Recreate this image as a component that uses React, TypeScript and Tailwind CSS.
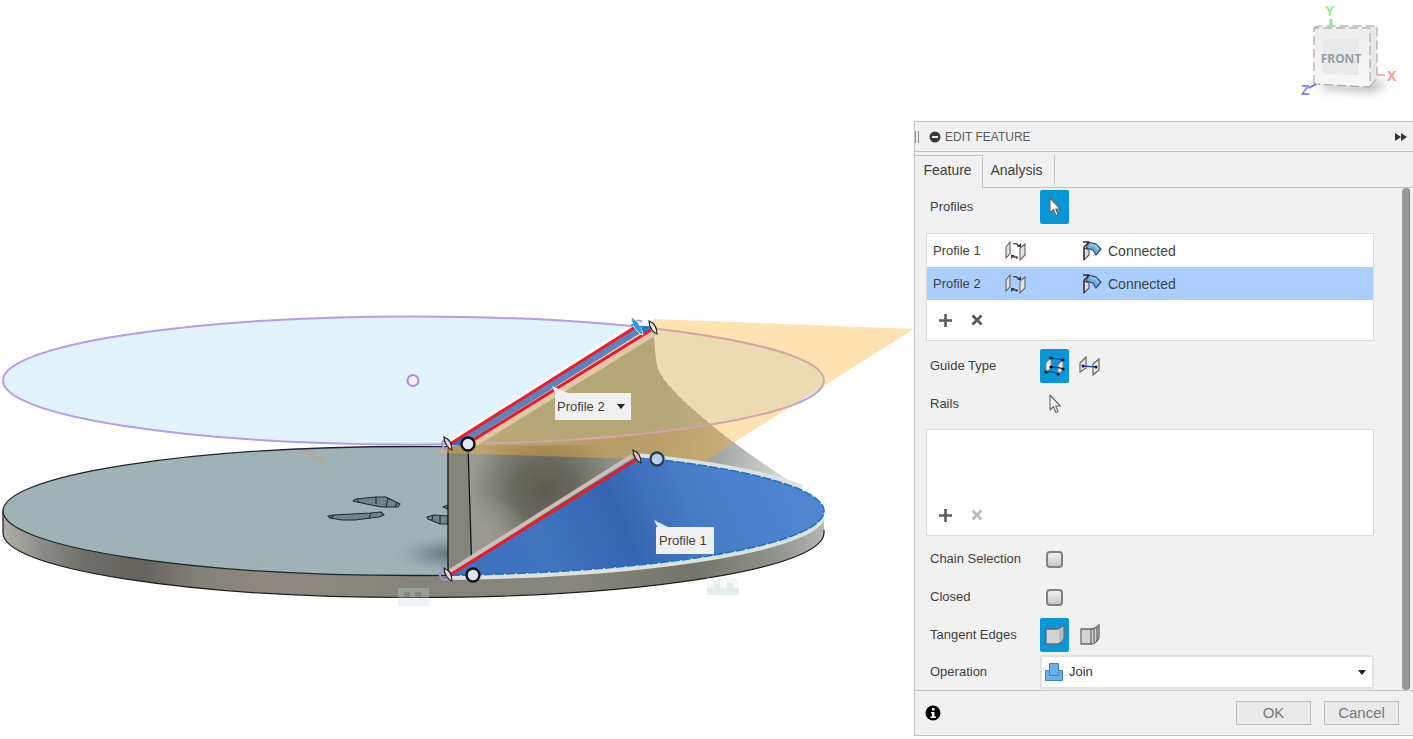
import { useState, type ReactNode } from 'react';
import clsx from 'clsx';

const RINGS = [
  { x: 468, y: 444, fill: '#e3e9f0', stroke: '#111111' },
  { x: 657, y: 459, fill: '#b9d0e8', stroke: '#2d3e52' },
  { x: 473, y: 575, fill: '#d9e4f2', stroke: '#111111' },
];

const GRIPS = [
  { x: 448, y: 444, fill: '#ead3dc', stroke: '#222222' },
  { x: 653, y: 328, fill: '#f3ece4', stroke: '#222222' },
  { x: 637, y: 457, fill: '#cfc9c4', stroke: '#222222' },
  { x: 448, y: 575, fill: '#ead3dc', stroke: '#222222' },
];

function ModelDrawing() {
  return (
    <svg
      className="block h-[739px] w-[914px]"
      viewBox="0 0 914 739"
      role="img"
      aria-label="Loft between two profiles"
    >
      <defs>
        <linearGradient id="wall" x1="0" x2="1">
          <stop offset="0" stopColor="#b0b0ab" />
          <stop offset="0.05" stopColor="#8c8a84" />
          <stop offset="0.1" stopColor="#706e68" />
          <stop offset="0.17" stopColor="#65635e" />
          <stop offset="0.24" stopColor="#85817b" />
          <stop offset="0.34" stopColor="#8e8980" />
          <stop offset="0.5" stopColor="#85837a" />
          <stop offset="0.7" stopColor="#87867e" />
          <stop offset="0.84" stopColor="#74746b" />
          <stop offset="0.94" stopColor="#8f918b" />
          <stop offset="1" stopColor="#b4b7b3" />
        </linearGradient>
        <linearGradient
          id="loft"
          gradientUnits="userSpaceOnUse"
          x1="468"
          y1="440"
          x2="800"
          y2="490"
        >
          <stop offset="0" stopColor="#999d95" />
          <stop offset="0.15" stopColor="#90958b" />
          <stop offset="0.35" stopColor="#8c9287" />
          <stop offset="0.55" stopColor="#8d9489" />
          <stop offset="0.75" stopColor="#a2a8a3" />
          <stop offset="0.88" stopColor="#c2c8c4" />
          <stop offset="1" stopColor="#e4e7e5" />
        </linearGradient>
        <radialGradient
          id="loftDark"
          gradientUnits="userSpaceOnUse"
          cx="545"
          cy="490"
          r="75"
        >
          <stop offset="0" stopColor="#5e5c52" />
          <stop offset="0.4" stopColor="#626158" stopOpacity="0.85" />
          <stop offset="1" stopColor="#666558" stopOpacity="0" />
        </radialGradient>
        <radialGradient
          id="loftLight"
          gradientUnits="userSpaceOnUse"
          cx="485"
          cy="532"
          r="40"
        >
          <stop offset="0" stopColor="#9c9a91" />
          <stop offset="1" stopColor="#9c9a91" stopOpacity="0" />
        </radialGradient>
        <radialGradient id="shade">
          <stop offset="0" stopColor="#5e737a" />
          <stop offset="0.4" stopColor="#73888e" stopOpacity="0.7" />
          <stop offset="1" stopColor="#9fb3b6" stopOpacity="0" />
        </radialGradient>
        <linearGradient
          id="blue"
          gradientUnits="userSpaceOnUse"
          x1="500"
          y1="590"
          x2="780"
          y2="470"
        >
          <stop offset="0" stopColor="#3f72bf" />
          <stop offset="0.2" stopColor="#4173bf" />
          <stop offset="0.45" stopColor="#3565b2" />
          <stop offset="0.68" stopColor="#477bc6" />
          <stop offset="1" stopColor="#4e86d2" />
        </linearGradient>
        <clipPath id="discLeft">
          <path d="M0 440H448V600H0Z" />
        </clipPath>
        <clipPath id="discRight">
          <path d="M448 578 636 452H824V600H448Z" />
        </clipPath>
      </defs>

      {/* base disc */}
      <path
        d="M3 511A410.5 64.5 0 0 0 824 511V533A410.5 64.5 0 0 1 3 533Z"
        fill="url(#wall)"
      />
      <path
        d="M3 511V533A410.5 64.5 0 0 0 824 533V530"
        fill="none"
        stroke="#1c1c1c"
        strokeWidth="1.2"
      />
      <g clipPath="url(#discLeft)">
        <ellipse
          cx="413.5"
          cy="511"
          rx="410.5"
          ry="64.5"
          fill="#9fb3b6"
          stroke="#1c2528"
          strokeWidth="1.3"
        />
        <ellipse cx="452" cy="554" rx="65" ry="22" fill="url(#shade)" />
      </g>
      <path d="M300 450 313 451 326 461 326 466Z" fill="#b5a596" opacity="0.6" />
      <path d="M250 568 267 560 266 566Z" fill="#b5a596" opacity="0.4" />

      {/* holes in the disc */}
      <g fill="#70858b" stroke="#1d2b30" strokeWidth="1.1" strokeLinejoin="round">
        <path d="M353 501 356 499 376 497H386L400 504 398 507H381L357 502Z" />
        <path d="M376 497V504M388 498 386 507M397 503 395 507M357 499 359 502" />
        <path d="M328 516 333 515 371 513 381 512 384 515 379 517 355 520H342L330 518Z" />
        <path d="M371 513 369 518M334 515 331 518" />
        <path d="M427 517 434 515 448 516V524H440L428 519Z" />
        <path d="M440 516V524M433 515 432 520" />
        <path d="M443 507 448 505V509Z" />
      </g>

      {/* loft body */}
      <path
        d="M468 444 654 330C654 345 656 362 658 370C670 392 696 412 726 437C748 453 778 474 802 489A410.5 64.5 0 0 0 636 457L472 572Z"
        fill="url(#loft)"
      />
      <path d="M468 446 600 445 636 457 472 572Z" fill="url(#loftDark)" />
      <path d="M469 480 540 515 472 572Z" fill="url(#loftLight)" />
      <path d="M448 446H468L472 575H448Z" fill="#84847a" />
      <path
        d="M448 446V575M468 446 472 575"
        fill="none"
        stroke="#141414"
        strokeWidth="1.3"
      />
      <path
        d="M658 370C670 392 696 412 726 437L738 446"
        fill="none"
        stroke="#4c4c3c"
        strokeWidth="1"
        strokeDasharray="1 6"
      />

      {/* upper sketch circle */}
      <ellipse cx="413.5" cy="380.5" rx="410.5" ry="64" fill="#78c8f0" fillOpacity="0.22" />
      <ellipse
        cx="413.5"
        cy="380.5"
        rx="410.5"
        ry="64"
        fill="none"
        stroke="#b79ce8"
        strokeWidth="2"
      />
      <circle cx="413" cy="380.5" r="5.5" fill="#f1f0fd" stroke="#b088e2" strokeWidth="2" />

      {/* construction plane */}
      <path
        d="M654 319 914 329 733 443 706 461 440 453V450L468 440 650 326Z"
        fill="#ffb434"
        fillOpacity="0.38"
      />

      {/* lower profile */}
      <g clipPath="url(#discRight)">
        <path
          d="M448 577A410.5 64.5 0 0 0 824 513M636 456A410.5 64.5 0 0 1 802 488"
          fill="none"
          stroke="#dfe1dc"
          strokeWidth="6"
        />
      </g>
      <path
        d="M448 575.3 636 457A410.5 64.5 0 0 1 824 511A410.5 64.5 0 0 1 448 575.3Z"
        fill="url(#blue)"
      />
      <path
        d="M654 459A410.5 64.5 0 0 1 824 511A410.5 64.5 0 0 1 448 575.3"
        fill="none"
        stroke="#1c72c8"
        strokeWidth="1.6"
        strokeDasharray="9 2"
      />
      <path d="M450 571 632 456" stroke="#cbbfbd" strokeWidth="4" />
      <path d="M450 575 637 459" stroke="#f01920" strokeWidth="3" />

      {/* upper profile */}
      <path d="M474 445 656 333" stroke="#dccb9f" strokeWidth="4" />
      <path d="M450 441 628 328" stroke="#ffffff" strokeWidth="3" />
      <path d="M450 444 636 325 650 327 466 443Z" fill="#5b83bf" />
      <path d="M636 327 645 326 654 327 642 334Z" fill="#2672cf" />
      <path d="M450 445 462 437 472 441 462 446Z" fill="#2672cf" />
      <path d="M450 444 637 326" stroke="#ee1c24" strokeWidth="3" />
      <path d="M472 443 652 332" stroke="#f5c0b0" strokeWidth="4" />
      <path d="M470 442 651 330" stroke="#e51a28" strokeWidth="3" />

      {/* handles */}
      <g fill="none" stroke="#ae8ce2" strokeWidth="2">
        <circle cx="446" cy="444" r="4" />
        <circle cx="445" cy="575" r="5" />
        <path d="M635 322A5 5 0 0 1 642 322" />
      </g>
      {RINGS.map((ring) => (
        <circle
          key={`${ring.x}-${ring.y}`}
          cx={ring.x}
          cy={ring.y}
          r="6.5"
          fill={ring.fill}
          stroke={ring.stroke}
          strokeWidth="2.4"
        />
      ))}
      {GRIPS.map((grip) => (
        <path
          key={`${grip.x}-${grip.y}`}
          transform={`translate(${grip.x} ${grip.y})`}
          d="M-4-7C1-5 4 0 4 6C1 5-4 0-4-7Z"
          fill={grip.fill}
          stroke={grip.stroke}
          strokeWidth="1.2"
        />
      ))}
      <path
        d="M631 317C637 320 642 327 643 335C637 333 632 326 631 317Z"
        fill="#2b9be0"
        stroke="#ffffff"
        strokeWidth="0.8"
      />
      <path d="M631 325 637 324M638 329 643 326" stroke="#2b9be0" strokeWidth="1.6" />

      {/* constraint marks */}
      <g opacity="0.3">
        <path d="M398 588H429V606H398Z" fill="#c6dcda" />
        <path d="M404 592H410V597H404ZM415 592H421V597H415Z" fill="#7d9391" />
      </g>
      <path d="M707 578H739V595H707Z" fill="#f1f5f4" fillOpacity="0.6" />
      <path d="M707 588H714V583H720V588H727V583H733V588H739V595H707Z" fill="#deefed" />

      {/* callout pointers */}
      <path d="M552 386 556 395 568 393Z" fill="#f0f0f0" />
      <path d="M654 520 658 528 668 527Z" fill="#e3e9f5" />
    </svg>
  );
}

function ViewCube() {
  return (
    <svg className="h-[110px] w-[133px]" viewBox="0 0 133 110" role="img" aria-label="View cube">
      <defs>
        <linearGradient id="cubeFace" x1="0" x2="0" y1="0" y2="1">
          <stop offset="0" stopColor="#eeeeee" />
          <stop offset="1" stopColor="#f7f7f7" />
        </linearGradient>
        <filter id="cubeShadow" x="-20%" y="-100%" width="140%" height="300%">
          <feGaussianBlur stdDeviation="4" />
        </filter>
      </defs>
      <path d="M38 84 98 80 106 86 92 93 44 90Z" fill="#c4c4c4" filter="url(#cubeShadow)" />
      <path d="M34 28 50 26H97V76L90 86 34 84Z" fill="#efefef" />
      <path d="M34 28H90V87L34 84Z" fill="url(#cubeFace)" />
      <path d="M90 28 97 26V78L90 87Z" fill="#e8e8e8" />
      <path d="M43 39H79V75L43 74Z" fill="#e7e9eb" />
      <path
        d="M34 84V28H90V87L34 84M34 28 38 26H97V78L90 87"
        fill="none"
        stroke="#9c9c9c"
        strokeWidth="1"
        strokeDasharray="9 4"
      />
      <text
        x="61"
        y="63"
        textAnchor="middle"
        className="font-['Noto_Sans',sans-serif] text-xs font-bold"
        fill="#989ea4"
      >
        FRONT
      </text>
      <path d="M51 19V25" stroke="#7bed7b" strokeWidth="3" />
      <path d="M97 75H105" stroke="#f5a0a0" strokeWidth="1.5" />
      <path d="M29 88 36 84" stroke="#6a6aea" strokeWidth="2" />
      <g className="font-['Liberation_Sans',sans-serif] text-[14px] font-bold">
        <text x="45" y="16" fill="#8bee8b">Y</text>
        <text x="107" y="81" fill="#f79a9a">X</text>
        <text x="21" y="95" fill="#8585ee">Z</text>
      </g>
    </svg>
  );
}

function CursorIcon({ light = false }: { light?: boolean }) {
  return (
    <svg className="h-5 w-3" viewBox="0 0 12 20" aria-hidden="true">
      <path
        d="M1 1V16L4.500 12.500 6.800 18.500 9 17.600 6.800 12H11.300Z"
        fill={light ? '#ffffff' : '#f4f4f4'}
        stroke="#666666"
        strokeWidth="1.1"
        strokeLinejoin="round"
      />
    </svg>
  );
}

function FlipIcon() {
  return (
    <svg className="h-5 w-[22px]" viewBox="0 0 22 20" aria-hidden="true">
      <path
        d="M1 6 5 1V13L1 17ZM15 7 20 3V14L15 19Z"
        fill="#e2e2e2"
        stroke="#666666"
        strokeWidth="1.1"
      />
      <path
        d="M8 3C11 2 12 3 14 5M8 16H12V18"
        fill="none"
        stroke="#3d3d3d"
        strokeWidth="1.3"
      />
      <path d="M12 6H16V2ZM6 14H10L6 18Z" fill="#3d3d3d" />
    </svg>
  );
}

function ConnectedIcon() {
  return (
    <svg className="h-5 w-5" viewBox="0 0 20 20" aria-hidden="true">
      <path d="M2 7 7 9V14L2 19Z" fill="#dddddd" stroke="#555555" strokeWidth="1.1" />
      <path d="M7 1 14 3 19 8 14 14 11 9 4 7Z" fill="#77a9da" stroke="#254f78" strokeWidth="1.2" />
      <path d="M8 4 14 5 16 9" fill="none" stroke="#9fc6ea" strokeWidth="1.5" />
      <path d="M1 1H7M2 19V6L7 1" fill="none" stroke="#2e2e2e" strokeWidth="1.3" />
    </svg>
  );
}

function RailsIcon() {
  return (
    <svg className="h-[22px] w-[22px]" viewBox="0 0 22 22" aria-hidden="true">
      <path d="M2 8 7 3V13L2 17ZM14 10 19 5V15L14 19Z" fill="#ededed" stroke="#888888" strokeWidth="1" />
      <path
        d="M7 3C11 4 15 3 19 5M7 12C11 12 15 12 19 14M2 17C6 16 10 17 14 19"
        fill="none"
        stroke="#103a8c"
        strokeWidth="1.3"
      />
      <g fill="#0b0b0b">
        <circle cx="7" cy="3" r="1.6" />
        <circle cx="19" cy="5" r="1.6" />
        <circle cx="7" cy="12" r="1.6" />
        <circle cx="19" cy="14" r="1.6" />
        <circle cx="2" cy="17" r="1.6" />
        <circle cx="14" cy="19" r="1.6" />
      </g>
    </svg>
  );
}

function CenterlineIcon() {
  return (
    <svg className="h-[22px] w-[22px]" viewBox="0 0 22 22" aria-hidden="true">
      <path
        d="M1 8 7 2V13L1 17ZM14 9 20 4V15L14 20Z"
        fill="#e8e8e8"
        stroke="#5c5c5c"
        strokeWidth="1.1"
      />
      <path d="M4 11 17 12" stroke="#24479f" strokeWidth="1.5" />
      <circle cx="4" cy="11" r="1.5" fill="#1a1a1a" />
      <circle cx="17" cy="12" r="1.5" fill="#1a1a1a" />
    </svg>
  );
}

function TangentIcon({ split = false }: { split?: boolean }) {
  return (
    <svg className="h-[22px] w-[22px]" viewBox="0 0 22 22" aria-hidden="true">
      <path
        d="M2 5H12C16 5 18 3 20 1V14C18 18 16 20 12 20H2Z"
        fill="#d2d3d4"
        stroke="#66696b"
        strokeWidth="1.3"
      />
      {split ? (
        <path d="M12 5V20M15 4V18M18 3V17" stroke="#5f6163" strokeWidth="1.2" />
      ) : (
        <path d="M15 5 19 3V14L15 18Z" fill="#b8babc" />
      )}
    </svg>
  );
}

function ListActions({ removable }: { removable: boolean }) {
  return (
    <div className="flex h-10 items-center gap-4 pl-2.5">
      <button type="button" aria-label="Add" className="grid size-4 place-items-center">
        <svg className="size-[13px]" viewBox="0 0 13 13">
          <path d="M6.500 0V13M0 6.500H13" stroke="#5c5c5c" strokeWidth="2.600" />
        </svg>
      </button>
      <button
        type="button"
        aria-label="Remove"
        disabled={!removable}
        className={clsx(
          'grid size-4 place-items-center',
          removable ? 'text-[#555555]' : 'text-[#b9b9b9]',
        )}
      >
        <svg className="size-3" viewBox="0 0 12 12">
          <path
            d="M1.500 1.500 10.500 10.500M10.500 1.500 1.500 10.500"
            stroke="currentColor"
            strokeWidth="2.600"
          />
        </svg>
      </button>
    </div>
  );
}

interface ToolButtonProps {
  label: string;
  active?: boolean;
  children: ReactNode;
}

function ToolButton({ label, active = false, children }: ToolButtonProps) {
  return (
    <button
      type="button"
      aria-label={label}
      aria-pressed={active}
      className={clsx(
        'flex h-[34px] w-[29px] items-center justify-center rounded-xs',
        active && 'bg-[#0796d8]',
      )}
    >
      {children}
    </button>
  );
}

function Row({ label, children }: { label: string; children: ReactNode }) {
  return (
    <div className="flex h-[38px] items-center pl-1">
      <span className="w-[110px]">{label}</span>
      <div className="flex items-center gap-1.5">{children}</div>
    </div>
  );
}

function CheckRow({ id, label }: { id: string; label: string }) {
  return (
    <div className="flex h-[38px] items-center pl-1">
      <label htmlFor={id} className="w-[116px]">
        {label}
      </label>
      <input
        id={id}
        type="checkbox"
        className="size-[17px] appearance-none rounded-sm border-2 border-[#808080] bg-linear-to-b from-[#f1f1f1] to-[#c8c8c8] checked:to-[#0796d8]"
      />
    </div>
  );
}

function Caret() {
  return (
    <svg className="h-[5px] w-2" viewBox="0 0 8 5" aria-hidden="true">
      <path d="M0 0H8L4 5Z" fill="#222222" />
    </svg>
  );
}

function EditFeaturePanel() {
  const [selected, setSelected] = useState('Profile 2');

  return (
    <section className="border-y border-l border-[#c3c3c3] bg-[#f1f1f1] text-[13px] text-[#3f3f3f]">
      <header className="flex h-[29px] items-center pr-1.5">
        <span className="h-3 w-1 border-x border-[#8d8d8d]" />
        <svg className="ml-2.5 size-3" viewBox="0 0 12 12" aria-hidden="true">
          <circle cx="6" cy="6" r="5.500" fill="#3a3a3a" />
          <path d="M3 6H9" stroke="#ffffff" strokeWidth="1.800" />
        </svg>
        <h1 className="ml-1 flex-1 text-xs text-[#5c5c5c]">EDIT FEATURE</h1>
        <button type="button" aria-label="Expand">
          <svg className="h-2 w-3" viewBox="0 0 12 8">
            <path d="M0 0 6 4 0 8ZM6 0 12 4 6 8Z" fill="#333333" />
          </svg>
        </button>
      </header>

      <div className="flex h-[37px] items-stretch border-t border-[#c3c3c3] text-sm" role="tablist">
        <button
          type="button"
          role="tab"
          aria-selected="true"
          className="mt-[3px] w-[68px] border-t border-r border-[#c3c3c3] pr-0.5 pb-1"
        >
          Feature
        </button>
        <div className="flex flex-1 items-stretch border-b border-[#c3c3c3] pt-[3px] pb-0.5">
          <button
            type="button"
            role="tab"
            aria-selected="false"
            className="w-[72px] border-r border-[#c3c3c3] pr-1"
          >
            Analysis
          </button>
        </div>
      </div>

      <div className="flex">
        <div className="min-w-0 flex-1 pr-7 pl-[11px]">
          <Row label="Profiles">
            <ToolButton label="Select profiles" active>
              <CursorIcon light />
            </ToolButton>
          </Row>

          <div className="mt-[7px] border border-[#dcdcdc] bg-white">
            <table className="w-full border-collapse">
              <tbody>
                {['Profile 1', 'Profile 2'].map((name) => (
                  <tr
                    key={name}
                    onClick={() => setSelected(name)}
                    className={clsx('h-[33px]', selected === name && 'bg-[#aacfff]')}
                  >
                    <td className="w-[78px] p-0 pl-1.5">{name}</td>
                    <td className="w-[75px] p-0">
                      <FlipIcon />
                    </td>
                    <td className="p-0">
                      <div className="flex items-center gap-1.5 pl-0.5 text-sm">
                        <ConnectedIcon />
                        Connected
                      </div>
                    </td>
                  </tr>
                ))}
              </tbody>
            </table>
            <ListActions removable />
          </div>

          <div className="mt-1.5">
            <Row label="Guide Type">
              <ToolButton label="Rails" active>
                <RailsIcon />
              </ToolButton>
              <ToolButton label="Centerline">
                <CenterlineIcon />
              </ToolButton>
            </Row>
            <Row label="Rails">
              <ToolButton label="Select rails">
                <CursorIcon />
              </ToolButton>
            </Row>
          </div>

          <div className="mt-1.5 border border-[#dcdcdc] bg-white pt-[65px]">
            <ListActions removable={false} />
          </div>

          <div className="mt-1">
            <CheckRow id="chain" label="Chain Selection" />
            <CheckRow id="closed" label="Closed" />
            <Row label="Tangent Edges">
              <ToolButton label="Merge tangent edges" active>
                <TangentIcon />
              </ToolButton>
              <ToolButton label="Keep tangent edges">
                <TangentIcon split />
              </ToolButton>
            </Row>
            <div className="flex h-9 items-center pl-1">
              <label htmlFor="operation" className="w-[110px]">
                Operation
              </label>
              <div className="relative flex h-[34px] flex-1 items-center rounded-xs border-2 border-[#e1e1e1] bg-white">
                <svg
                  className="absolute left-[3px] size-[18px]"
                  viewBox="0 0 18 18"
                  aria-hidden="true"
                >
                  <path
                    d="M4.500 .5H13.500V7.500H17.500V17.500H.5V7.500H4.500Z"
                    fill="#68b0ea"
                    stroke="#3c83c0"
                  />
                  <path d="M4.500 7.500V12.500H13.500V7.500" fill="none" stroke="#3c83c0" />
                </svg>
                <select
                  id="operation"
                  defaultValue="Join"
                  className="h-full w-full appearance-none pl-[27px] text-[#333333]"
                >
                  <option>Join</option>
                  <option>Cut</option>
                  <option>Intersect</option>
                </select>
                <span className="pointer-events-none absolute right-1.5 flex">
                  <Caret />
                </span>
              </div>
            </div>
          </div>
        </div>
        <div className="mr-[3px] w-2 rounded-full border-r border-[#7c7c7c] bg-[#999999]" />
      </div>

      <footer className="flex h-[45px] items-center border-t border-[#c3c3c3] pr-3.5 pl-2.5">
        <svg className="size-4" viewBox="0 0 16 16" role="img" aria-label="Information">
          <circle cx="8" cy="8" r="7.500" fill="#000000" />
          <path d="M7 3H9.500V5.500H7ZM6 7H9.500V11.500H11V13H5.500V11.500H7V8.500H6Z" fill="#ffffff" />
        </svg>
        <div className="ml-auto flex gap-[13px] text-[15px] text-[#777777]">
          <button type="button" className="h-6 w-[75px] border border-[#bcbcbc] bg-[#e9e9e9]">
            OK
          </button>
          <button type="button" className="h-6 w-[75px] border border-[#bcbcbc] bg-[#e9e9e9]">
            Cancel
          </button>
        </div>
      </footer>
    </section>
  );
}

export default function App() {
  return (
    <div className="flex min-h-screen overflow-hidden bg-white font-['Liberation_Sans',Arial,sans-serif]">
      <main className="relative min-w-0 flex-1 overflow-hidden">
        <ModelDrawing />
        <div className="absolute top-[393px] left-[555px] flex h-[27px] w-[76px] items-center bg-[#f0f0f0] text-[13px] text-[#3f3f3f]">
          <select
            aria-label="Active profile"
            defaultValue="Profile 2"
            className="h-full w-full appearance-none pl-0.5"
          >
            <option>Profile 1</option>
            <option>Profile 2</option>
          </select>
          <span className="pointer-events-none absolute right-1.5 flex">
            <Caret />
          </span>
        </div>
        <div className="absolute top-[527px] left-[656px] flex h-[27px] w-[58px] items-center bg-[#f0f0f0] pl-[3px] text-[13px] text-[#3f3f3f]">
          Profile 1
        </div>
      </main>
      <aside className="w-[499px] shrink-0">
        <div className="flex h-[121px] justify-end">
          <ViewCube />
        </div>
        <EditFeaturePanel />
      </aside>
    </div>
  );
}
